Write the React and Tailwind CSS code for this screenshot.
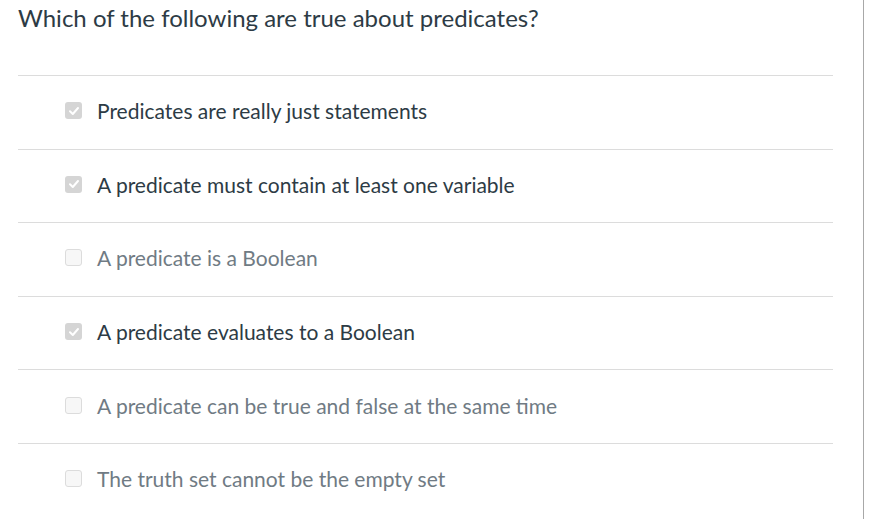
import React from "react";

const items = [
  { text: "Predicates are really just statements", checked: true },
  { text: "A predicate must contain at least one variable", checked: true },
  { text: "A predicate is a Boolean", checked: false },
  { text: "A predicate evaluates to a Boolean", checked: true },
  { text: "A predicate can be true and false at the same time", checked: false },
  { text: "The truth set cannot be the empty set", checked: false },
];

function Box({ checked }) {
  if (checked) {
    return (
      <div className="w-[17px] h-[17px] rounded-[3px] bg-[#d5d5d5] flex items-center justify-center shrink-0">
        <svg width="12" height="12" viewBox="0 0 12 12" fill="none">
          <path d="M2 6.3 L4.8 9 L10 3" stroke="#ffffff" strokeWidth="2" strokeLinecap="round" strokeLinejoin="round" />
        </svg>
      </div>
    );
  }
  return <div className="w-[17px] h-[17px] rounded-[3px] bg-[#f7f7f7] border border-[#dcdcdc] shrink-0" />;
}

export default function App() {
  return (
    <div className="flex h-screen bg-white" style={{ fontFamily: "Lato, 'Open Sans', sans-serif" }}>
      <div className="w-[864px] h-full border-r border-[#a8a8a8] pl-[18px]">
        <div className="w-[815px]">
          <div className="h-[75px] pt-[4px]">
            <h1 className="text-[24px] leading-[1.2] text-[#2d3b45]">Which of the following are true about predicates?</h1>
          </div>
          {items.map((it, i) => (
            <div key={i} className="h-[73.6px] border-t border-[#dcdcdc] flex items-center pl-[47px] gap-[15px] pb-[3px]">
              <Box checked={it.checked} />
              <span className={"text-[21px] leading-[1.2] " + (it.checked ? "text-[#2d3b45]" : "text-[#707b84]")}>{it.text}</span>
            </div>
          ))}
        </div>
      </div>
    </div>
  );
}
